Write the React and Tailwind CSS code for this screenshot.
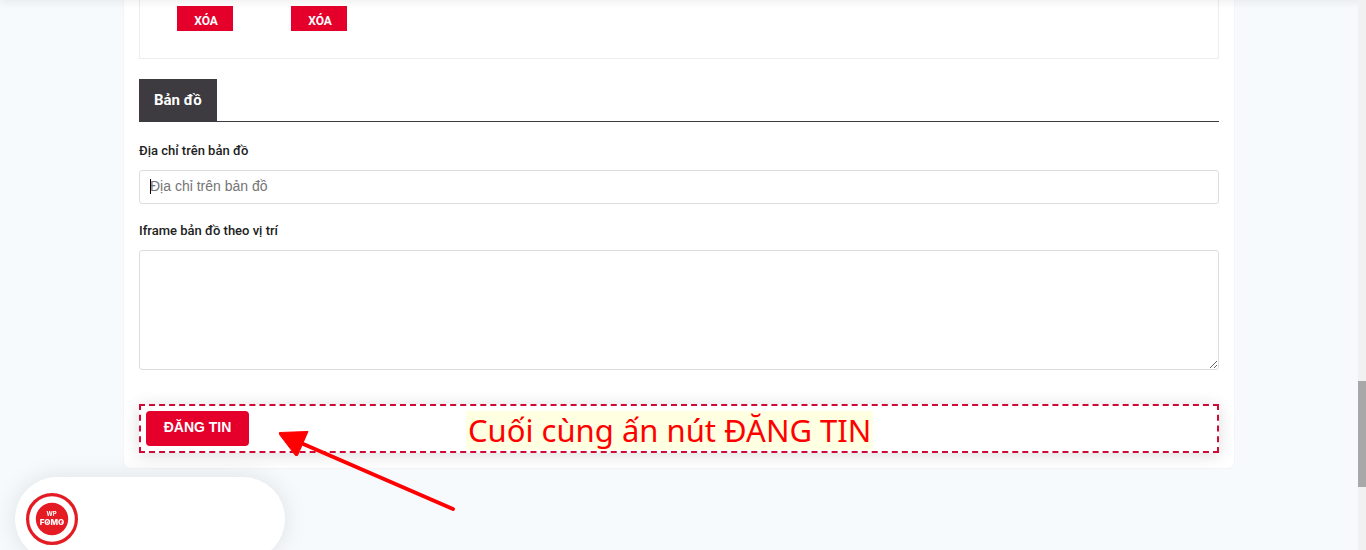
import React from 'react';

const photos = [1, 2];

function DeleteButton() {
  return (
    <button
      type="button"
      className="h-[25px] w-14 bg-[#e4002b] pt-1 pl-[2px] font-['Roboto',sans-serif] text-[12px] leading-4 font-bold text-white"
    >
      XÓA
    </button>
  );
}

function FieldLabel({ htmlFor, children }) {
  return (
    <label
      htmlFor={htmlFor}
      className="block font-['Roboto',sans-serif] text-[13px] leading-5 font-medium text-[#212121]"
    >
      {children}
    </label>
  );
}

function FomoLogo() {
  return (
    <svg viewBox="0 0 52 52" className="size-[52px]" role="img" aria-label="WP FOMO">
      <circle cx="26" cy="26" r="24.4" fill="#fff" stroke="#e51b24" strokeWidth="3.2" />
      <circle cx="26" cy="26" r="16.2" fill="#e51b24" />
      <g fill="#fff" fontFamily="Inter, sans-serif" textAnchor="middle">
        <text x="25.5" y="23" fontSize="6" fontWeight="700">WP</text>
        <text x="26" y="32.3" fontSize="8" fontWeight="800">FOMO</text>
      </g>
      <g fill="#fff">
        <circle cx="21.3" cy="29.4" r="0.8" />
        <circle cx="36" cy="29.4" r="0.8" />
      </g>
    </svg>
  );
}

function FomoWidget() {
  return (
    <div className="fixed -bottom-[11px] left-[15px] flex h-[84px] w-[270px] items-center rounded-full bg-white pl-[11px] shadow-[0_0_24px_rgba(0,0,0,0.1)]">
      <FomoLogo />
    </div>
  );
}

function Scrollbar() {
  return (
    <div className="fixed inset-y-0 right-0 w-2 bg-[#f1f1f1] pt-[381px]" aria-hidden="true">
      <div className="h-[106px] bg-[#a8a8a8]" />
    </div>
  );
}

export default function App() {
  return (
    <div className="min-h-screen bg-[#f6fafd] pr-2">
      <main className="mx-auto max-w-[1110px] rounded-b-md bg-white px-[15px] pb-[15px] shadow-[0_0_2px_rgba(0,0,0,0.07)]">
        {/* Uploaded photos */}
        <section className="flex h-[59px] gap-[58px] border-x border-b border-[#ededed] pt-[6px] pl-[37px]">
          {photos.map((id) => (
            <DeleteButton key={id} />
          ))}
        </section>

        {/* Map */}
        <section className="pt-5">
          <div className="flex border-b border-[#3d3a40]">
            <h2 className="bg-[#3d3a40] px-[15px] py-[11px] font-['Roboto',sans-serif] text-[15px] leading-5 font-bold text-white">
              Bản đồ
            </h2>
          </div>
          <form id="post-form" className="pt-[19px]">
            <FieldLabel htmlFor="address">Địa chỉ trên bản đồ</FieldLabel>
            <div className="relative mt-[9px]">
              <input
                id="address"
                type="text"
                placeholder="Địa chỉ trên bản đồ"
                className="block h-[34px] w-full rounded-[3px] border border-[#dddddd] bg-white px-[10px] pb-[2px] font-['Liberation_Sans',sans-serif] text-[14px] text-[#212121] outline-none placeholder:text-[#757575]"
              />
              <span className="absolute top-[9px] left-[11px] h-[15px] w-px bg-black" />
            </div>
            <div className="pt-[17px]">
              <FieldLabel htmlFor="iframe">Iframe bản đồ theo vị trí</FieldLabel>
              <textarea
                id="iframe"
                className="mt-[9px] block h-[120px] w-full resize rounded-[3px] border border-[#dddddd] bg-white p-[10px] font-['Liberation_Sans',sans-serif] text-[14px] outline-none"
              />
            </div>
          </form>
        </section>

        {/* Submit */}
        <div className="relative mt-[34px] flex h-[49px] items-start border-2 border-dashed border-[#cf0a36] bg-white pt-[5px] pl-[5px] shadow-[0_2px_15px_rgba(0,0,0,0.14)]">
          <button
            type="submit"
            form="post-form"
            className="h-[35px] w-[103px] rounded-[4px] bg-[#e4002b] pb-[2px] font-['Liberation_Sans',sans-serif] text-[14px] font-bold text-white"
          >
            ĐĂNG TIN
          </button>
          <p className="ml-[217px] h-[39px] bg-[#ffffe1] px-[2px] font-['Noto_Sans',sans-serif] text-[31px] leading-[38px] whitespace-nowrap text-[#ff0000]">
            Cuối cùng ấn nút ĐĂNG TIN
          </p>
          <svg
            viewBox="0 0 180 84"
            className="pointer-events-none absolute top-[24px] left-[136px] z-10 h-[84px] w-[180px]"
            aria-hidden="true"
          >
            <path d="M24 13 L176 79" stroke="#ff0000" strokeWidth="4" strokeLinecap="round" />
            <path d="M2.5 2.5 L31 1.5 L20.5 25.5 L18.5 25.5 L2.5 4.5 Z" fill="#ff0000" stroke="#ff0000" />
          </svg>
        </div>
      </main>

      {/* Shadow of the sticky header above */}
      <div className="fixed inset-x-0 -top-1 h-1 shadow-[0_0_10px_rgba(0,0,0,0.15)]" />
      <FomoWidget />
      <Scrollbar />
    </div>
  );
}
